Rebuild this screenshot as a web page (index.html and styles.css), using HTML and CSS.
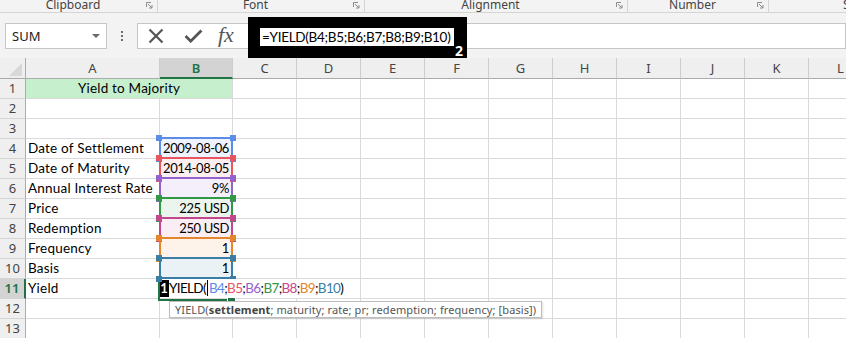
FILE: index.html
```html
<!DOCTYPE html>
<html lang="en">
<head>
    <meta charset="UTF-8">
    <title>Yield to Majority</title>
    <link rel="stylesheet" href="styles.css">
</head>
<body>
    <div class="ribbon">
        <div class="group g-clip"><span class="glabel">Clipboard</span><svg class="launch" viewBox="0 0 7 7"><path d="M0.5 5V0.5H5M2 2l4 4M6 3v3H3" fill="none" stroke="#8c8c8c" stroke-width="1"/></svg></div>
        <div class="group g-font"><span class="glabel">Font</span><svg class="launch" viewBox="0 0 7 7"><path d="M0.5 5V0.5H5M2 2l4 4M6 3v3H3" fill="none" stroke="#8c8c8c" stroke-width="1"/></svg></div>
        <div class="group g-align"><span class="glabel">Alignment</span><svg class="launch" viewBox="0 0 7 7"><path d="M0.5 5V0.5H5M2 2l4 4M6 3v3H3" fill="none" stroke="#8c8c8c" stroke-width="1"/></svg></div>
        <div class="group g-num"><span class="glabel">Number</span><svg class="launch" viewBox="0 0 7 7"><path d="M0.5 5V0.5H5M2 2l4 4M6 3v3H3" fill="none" stroke="#8c8c8c" stroke-width="1"/></svg></div>
        <div class="group g-styles"><span class="glabel">Styles</span></div>
    </div>

    <div class="fbar">
        <div class="namebox"><span>SUM</span><span class="drop"></span></div>
        <div class="grip"><i></i><i></i><i></i></div>
        <div class="fxbox">
            <svg class="ico-x" viewBox="0 0 16 16"><path d="M1.5 1.5l13 13M14.5 1.5l-13 13" stroke="#555" stroke-width="2.2" fill="none"/></svg>
            <svg class="ico-ok" viewBox="0 0 20 15"><path d="M1.5 7.5l5.5 5.5L18.5 1.5" stroke="#555" stroke-width="3" fill="none"/></svg>
            <span class="fx">fx</span>
        </div>
        <div class="finput"></div>
        <!-- callout over the formula bar -->
        <div class="callout">
            <div class="ftext">=YIELD(B4;B5;B6;B7;B8;B9;B10)</div>
            <span class="num">2</span>
        </div>
    </div>

    <div class="sheet">
        <div class="ch corner"></div><div class="ch">A</div><div class="ch sel">B</div><div class="ch">C</div><div class="ch">D</div><div class="ch">E</div><div class="ch">F</div><div class="ch">G</div><div class="ch">H</div><div class="ch">I</div><div class="ch">J</div><div class="ch">K</div><div class="ch">L</div>

        <div class="rh">1</div><div class="c merged">Yield to Majority</div><div class="c"></div><div class="c"></div><div class="c"></div><div class="c"></div><div class="c"></div><div class="c"></div><div class="c"></div><div class="c"></div><div class="c"></div><div class="c"></div>

        <div class="rh">2</div><div class="c"></div><div class="c"></div><div class="c"></div><div class="c"></div><div class="c"></div><div class="c"></div><div class="c"></div><div class="c"></div><div class="c"></div><div class="c"></div><div class="c"></div><div class="c"></div>

        <div class="rh">3</div><div class="c"></div><div class="c"></div><div class="c"></div><div class="c"></div><div class="c"></div><div class="c"></div><div class="c"></div><div class="c"></div><div class="c"></div><div class="c"></div><div class="c"></div><div class="c"></div>

        <div class="rh">4</div><div class="c">Date of Settlement</div><div class="c num-cell ref r1">2009-08-06<span class="hl"></span></div><div class="c"></div><div class="c"></div><div class="c"></div><div class="c"></div><div class="c"></div><div class="c"></div><div class="c"></div><div class="c"></div><div class="c"></div><div class="c"></div>

        <div class="rh">5</div><div class="c">Date of Maturity</div><div class="c num-cell ref r2">2014-08-05<span class="hl"></span></div><div class="c"></div><div class="c"></div><div class="c"></div><div class="c"></div><div class="c"></div><div class="c"></div><div class="c"></div><div class="c"></div><div class="c"></div><div class="c"></div>

        <div class="rh">6</div><div class="c">Annual Interest Rate</div><div class="c num-cell ref r3">9%<span class="hl"></span></div><div class="c"></div><div class="c"></div><div class="c"></div><div class="c"></div><div class="c"></div><div class="c"></div><div class="c"></div><div class="c"></div><div class="c"></div><div class="c"></div>

        <div class="rh">7</div><div class="c">Price</div><div class="c num-cell ref r4">225 USD<span class="hl"></span></div><div class="c"></div><div class="c"></div><div class="c"></div><div class="c"></div><div class="c"></div><div class="c"></div><div class="c"></div><div class="c"></div><div class="c"></div><div class="c"></div>

        <div class="rh">8</div><div class="c">Redemption</div><div class="c num-cell ref r5">250 USD<span class="hl"></span></div><div class="c"></div><div class="c"></div><div class="c"></div><div class="c"></div><div class="c"></div><div class="c"></div><div class="c"></div><div class="c"></div><div class="c"></div><div class="c"></div>

        <div class="rh">9</div><div class="c">Frequency</div><div class="c num-cell ref r6">1<span class="hl"></span></div><div class="c"></div><div class="c"></div><div class="c"></div><div class="c"></div><div class="c"></div><div class="c"></div><div class="c"></div><div class="c"></div><div class="c"></div><div class="c"></div>

        <div class="rh">10</div><div class="c">Basis</div><div class="c num-cell ref r7">1<span class="hl"></span></div><div class="c"></div><div class="c"></div><div class="c"></div><div class="c"></div><div class="c"></div><div class="c"></div><div class="c"></div><div class="c"></div><div class="c"></div><div class="c"></div>

        <div class="rh sel">11</div><div class="c">Yield</div>
        <div class="c active">
            <span class="badge">1</span><span class="edit">YIELD(<i class="cursor"></i><span class="t1">B4</span>;<span class="t2">B5</span>;<span class="t3">B6</span>;<span class="t4">B7</span>;<span class="t5">B8</span>;<span class="t6">B9</span>;<span class="t7">B10</span>)</span>
            <span class="act-border"></span>
            <div class="tip">YIELD(<b>settlement</b>; maturity; rate; pr; redemption; frequency; [basis])</div>
        </div>
        <div class="c"></div><div class="c"></div><div class="c"></div><div class="c"></div><div class="c"></div><div class="c"></div><div class="c"></div><div class="c"></div><div class="c"></div><div class="c"></div>

        <div class="rh">12</div><div class="c"></div><div class="c"></div><div class="c"></div><div class="c"></div><div class="c"></div><div class="c"></div><div class="c"></div><div class="c"></div><div class="c"></div><div class="c"></div><div class="c"></div><div class="c"></div>

        <div class="rh">13</div><div class="c"></div><div class="c"></div><div class="c"></div><div class="c"></div><div class="c"></div><div class="c"></div><div class="c"></div><div class="c"></div><div class="c"></div><div class="c"></div><div class="c"></div><div class="c"></div>
    </div>
</body>
</html>
```

FILE: styles.css
```css
* {
    box-sizing: border-box;
}
body {
    margin: 0;
    width: 846px;
    height: 338px;
    overflow: hidden;
    background: #fff;
    font-family: "Noto Sans", sans-serif;
    color: #000;
}

/* ribbon group labels */
.ribbon {
    display: flex;
    height: 13px;
    background: #f3f3f3;
    border-bottom: 1px solid #d5d5d5;
    overflow: hidden;
}
.group {
    display: flex;
    align-items: flex-start;
    height: 12px;
    border-right: 1px solid #d5d5d5;
    flex-shrink: 0;
}
.g-clip { width: 158px; }
.g-font { width: 207px; }
.g-align { width: 263px; }
.g-num { width: 141px; }
.g-styles { width: 120px; border-right: none; }
.glabel {
    flex: 1;
    text-align: center;
    font-size: 12px;
    line-height: 12px;
    color: #444;
    margin-top: -1px;
}
.g-styles .glabel {
    text-align: left;
    padding-left: 74px;
}
.launch {
    width: 7px;
    height: 7px;
    margin: 2px 4px 0 0;
}

/* formula bar */
.fbar {
    position: relative;
    display: flex;
    align-items: center;
    height: 45px;
    padding: 10px 0 9px;
    background: #f3f3f3;
}
.namebox {
    display: flex;
    align-items: center;
    width: 102px;
    height: 26px;
    margin-left: 5px;
    padding: 0 6px 0 6px;
    background: #fff;
    border: 1px solid #c6c6c6;
    font-size: 13px;
    color: #222;
}
.drop {
    margin-left: auto;
    border-left: 4px solid transparent;
    border-right: 4px solid transparent;
    border-top: 4px solid #6a6a6a;
}
.grip {
    display: flex;
    flex-direction: column;
    gap: 2px;
    margin-left: 14px;
}
.grip i {
    width: 2px;
    height: 2px;
    background: #6d6d6d;
}
.fxbox {
    display: flex;
    align-items: center;
    width: 113px;
    height: 26px;
    margin-left: 14px;
    padding-left: 10px;
    background: #fff;
    border: 1px solid #c6c6c6;
}
.ico-x {
    width: 16px;
    height: 16px;
}
.ico-ok {
    width: 19px;
    height: 14px;
    margin-left: 20px;
}
.fx {
    margin-left: 15px;
    font-family: "Liberation Serif", serif;
    font-style: italic;
    font-size: 22px;
    color: #555;
    line-height: 1;
    margin-top: -3px;
}
.finput {
    flex: 1;
    height: 26px;
    margin-left: -1px;
    background: #fff;
    border: 1px solid #c6c6c6;
}
.callout {
    position: absolute;
    left: 248px;
    top: 4px;
    width: 219px;
    height: 41px;
    padding: 11px 0 0 12px;
    background: #000;
}
.ftext {
    width: 194px;
    height: 18px;
    padding-left: 2px;
    background: #fff;
    font-family: Lato, sans-serif;
    font-size: 13.5px;
    letter-spacing: -0.3px;
    line-height: 18px;
    white-space: nowrap;
}
.callout .num {
    position: absolute;
    right: 4px;
    bottom: 0;
    color: #fff;
    font-size: 14px;
    font-weight: bold;
    line-height: 14px;
}

/* sheet grid */
.sheet {
    display: grid;
    grid-template-columns: 26px 134px 73px repeat(10, 64px);
    grid-template-rows: 21px;
    grid-auto-rows: 20px;
    width: 899px;
}
.ch {
    background: #efefef;
    border-right: 1px solid #cdcdcd;
    border-bottom: 1px solid #ababab;
    text-align: center;
    font-size: 13px;
    line-height: 20px;
    color: #444;
}
.ch.sel {
    background: #d3d3d3;
    color: #217346;
    font-weight: 600;
    border-bottom: 2px solid #217346;
}
.corner {
    position: relative;
    border-right-color: #ababab;
}
.corner::after {
    content: "";
    position: absolute;
    right: 3px;
    bottom: 2px;
    border-left: 13px solid transparent;
    border-bottom: 13px solid #d8d8d8;
}
.rh {
    background: #efefef;
    border-right: 1px solid #ababab;
    border-bottom: 1px solid #d4d4d4;
    text-align: center;
    font-size: 13px;
    line-height: 19px;
    color: #444;
}
.rh.sel {
    background: #d3d3d3;
    color: #217346;
    font-weight: 600;
    border-right: 2px solid #217346;
}
.c {
    border-right: 1px solid #dadada;
    border-bottom: 1px solid #dadada;
    padding: 0 2px;
    font-family: Lato, sans-serif;
    font-size: 13.5px;
    letter-spacing: 0.2px;
    line-height: 19px;
    white-space: nowrap;
}
.merged {
    grid-column: span 2;
    background: #c6efce;
    text-align: center;
}
.num-cell {
    text-align: right;
    padding-right: 3px;
    font-size: 13px;
    letter-spacing: -0.4px;
}

/* formula reference highlights */
.ref {
    position: relative;
}
.hl {
    position: absolute;
    top: -2px;
    left: -1px;
    right: -1px;
    bottom: -1px;
    z-index: 2;
    box-shadow: inset 0 0 0 2px var(--c);
}
.hl::before {
    content: "";
    position: absolute;
    top: -2px;
    left: -3px;
    width: 6px;
    height: 6px;
    background: var(--c);
    box-shadow: 74px 0 var(--c), 0 21px var(--c), 74px 21px var(--c);
}
.r1 { --c: #5b8de8; background: #eef3fd; }
.r2 { --c: #e8555f; background: #fdeeef; }
.r3 { --c: #9462cc; background: #f4effb; }
.r4 { --c: #2f9946; background: #ebf5ed; }
.r5 { --c: #c4468c; background: #faedf4; }
.r6 { --c: #e3862c; background: #fdf3ea; }
.r7 { --c: #3a7ea5; background: #ebf2f6; }

.t1 { color: #5b8de8; }
.t2 { color: #e8555f; }
.t3 { color: #9462cc; }
.t4 { color: #2f9946; }
.t5 { color: #c4468c; }
.t6 { color: #e3862c; }
.t7 { color: #3a7ea5; }

/* active cell in edit mode */
.active {
    position: relative;
    display: flex;
    align-items: center;
    padding: 0;
}
.badge {
    flex-shrink: 0;
    width: 10px;
    height: 17px;
    margin-left: -1px;
    background: #000;
    color: #fff;
    font-weight: bold;
    font-size: 13px;
    line-height: 17px;
    text-align: center;
    letter-spacing: 0;
}
.edit {
    flex-shrink: 0;
    position: relative;
    z-index: 2;
    background: #fff;
    padding-right: 3px;
    letter-spacing: -0.65px;
}
.cursor {
    display: inline-block;
    width: 1px;
    height: 16px;
    margin: 0 1px;
    background: #000;
    vertical-align: -3px;
}
.act-border {
    position: absolute;
    top: -2px;
    left: -2px;
    right: -1px;
    bottom: -3px;
    z-index: 1;
    box-shadow: inset 0 0 0 2px #217346;
}
.act-border::after {
    content: "";
    position: absolute;
    right: -3px;
    bottom: -3px;
    width: 7px;
    height: 7px;
    background: #217346;
    border: 1px solid #fff;
}
.tip {
    position: absolute;
    left: 9px;
    top: 22px;
    z-index: 3;
    height: 17px;
    padding: 0 5px;
    background: #fff;
    border: 1px solid #bdbdbd;
    box-shadow: 1px 1px 2px rgba(0, 0, 0, 0.12);
    font-family: "Noto Sans", sans-serif;
    font-size: 11px;
    line-height: 15px;
    letter-spacing: 0.1px;
    color: #555;
    white-space: nowrap;
}
.tip b {
    color: #444;
}
```
